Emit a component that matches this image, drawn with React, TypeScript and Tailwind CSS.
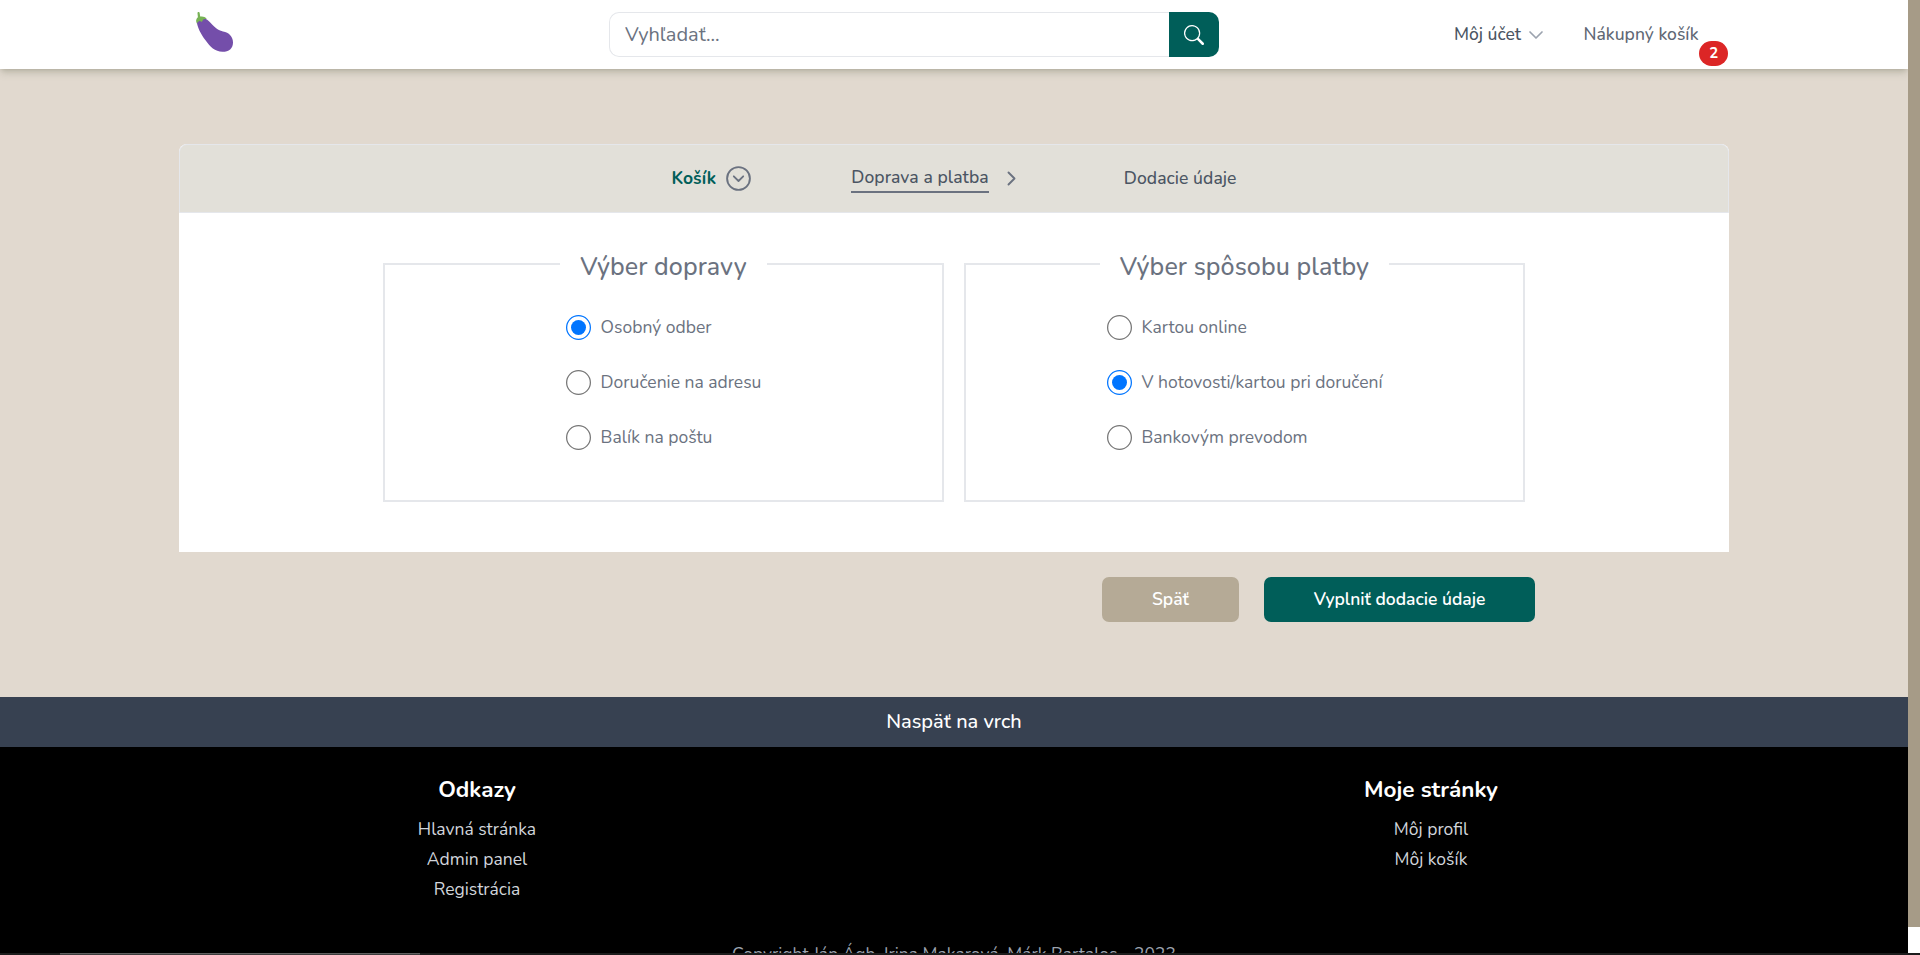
import React from 'react';
import { BsSearch } from 'react-icons/bs';

function Eggplant() {
  return (
    <svg viewBox="0 0 37 40" className="h-10 w-[37px]" aria-hidden="true">
      <path
        fill="#744eaa"
        d="M0.900 10C1.200 15 4.800 22 9.500 28.300C14 34.800 19 39.800 26.500 39.800C33 39.800 37 36.500 37 30.500C37 24.500 33 20.500 27 19.500C21 18.200 17.500 14 14.500 10.800C12 7.800 9.500 6.300 6.500 6.500C3.500 6.500 0.800 7.500 0.900 10Z"
      />
      <path
        fill="#77b255"
        d="M1.500 1.200C1.500 -0.200 3.500 -0.300 3.700 1.200L4.200 4.600C6.500 4 9 4.600 10.800 6.800C9.500 7 8.400 7.400 7.500 7.300C6.900 8.100 6.400 9.400 5.400 10.100C4.800 9.600 4.300 8.900 3.700 8.700C3 9.300 1.600 9.700 0.900 11.400C-0.300 9.400 -0.200 7 1.900 5.200Z"
      />
    </svg>
  );
}

function DownChevron() {
  return (
    <svg viewBox="0 0 16 16" className="h-4 w-4 text-[#9ca3af]" fill="none" stroke="currentColor" aria-hidden="true">
      <path d="M2 5L8 11L14 5" strokeWidth="1.700" strokeLinecap="round" strokeLinejoin="round" />
    </svg>
  );
}

function CircleChevron() {
  return (
    <svg viewBox="0 0 25 25" className="size-[25px] text-[#6b7280]" fill="none" stroke="currentColor" aria-hidden="true">
      <circle cx="12.500" cy="12.500" r="11.400" strokeWidth="1.900" />
      <path d="M7.800 10.300L12.500 15L17.200 10.300" strokeWidth="1.800" strokeLinecap="round" strokeLinejoin="round" />
    </svg>
  );
}

function RightChevron() {
  return (
    <svg viewBox="0 0 25 25" className="size-[25px] text-[#6b7280]" fill="none" stroke="currentColor" aria-hidden="true">
      <path d="M9.500 6.500L15.500 12.500L9.500 18.500" strokeWidth="1.900" strokeLinecap="round" strokeLinejoin="round" />
    </svg>
  );
}

type GroupProps = { title: string; name: string; options: string[]; selected: number };

function OptionGroup({ title, name, options, selected }: GroupProps) {
  return (
    <fieldset className="h-[258px] w-[561px] border-2 border-[#e5e7eb]">
      <legend className="mx-auto px-5 pt-[6px] text-[25px] leading-[34px] font-medium tracking-[0.09px] text-[#6b7280]">
        {title}
      </legend>
      <div className="flex justify-center pt-[31px]">
        <div className="flex flex-col gap-[30px]">
          {options.map((option, i) => (
            <label key={option} className="flex h-[25px] items-center gap-2.5 text-[17.5px] leading-[25px] text-[#6b7280]">
              <input type="radio" name={name} defaultChecked={i === selected} className="size-5 [zoom:1.25]" />
              {option}
            </label>
          ))}
        </div>
      </div>
    </fieldset>
  );
}

function LinkColumn({ title, links }: { title: string; links: string[] }) {
  return (
    <div className="flex w-[954px] flex-col items-center">
      <h2 className="mb-[7px] text-[22.5px] leading-[35px] font-bold text-white">{title}</h2>
      {links.map((link) => (
        <a key={link} href="#" className="text-[17.5px] leading-[30px] text-[#d1d5db]">
          {link}
        </a>
      ))}
    </div>
  );
}

export default function App() {
  return (
    <div className="flex h-[955px] w-[1920px] flex-col overflow-hidden bg-[#1c1c1c] font-['Nunito','Lato',sans-serif]">
      <div className="flex h-[953px] shrink-0">
        <div className="flex w-[1908px] flex-col overflow-hidden bg-[#e1d9cf]">
          <header className="z-10 flex h-[69px] shrink-0 bg-white shadow-[0_5px_7px_-1px_rgba(110,115,90,0.28),0_2px_4px_-2px_rgba(90,90,80,0.25)]">
            <div className="w-[609px] pt-3 pl-[196px]">
              <Eggplant />
            </div>
            <form className="mt-3 flex h-[45px] w-[610px]">
              <input
                placeholder="Vyhľadať..."
                className="min-w-0 flex-1 rounded-l-[10px] border border-r-0 border-[#e5e7eb] px-[15px] text-[20px] text-[#6b7280] outline-none placeholder:text-[#6b7280]"
              />
              <button type="button" aria-label="Hľadať" className="flex w-[50px] items-center justify-center rounded-r-[10px] bg-[#005e59] text-white">
                <BsSearch className="size-5" />
              </button>
            </form>
            <nav className="flex items-start pt-[22px] pl-[235px] text-[17.5px] leading-[25px] font-medium">
              <a href="#" className="flex items-center gap-[7px] text-[#4b5563]">
                Môj účet
                <DownChevron />
              </a>
              <a href="#" className="ml-[39.500px] text-[#5f6875]">Nákupný košík</a>
              <span className="mt-[19px] ml-[0.500px] flex h-[25px] w-[29px] items-center justify-center rounded-full bg-[#dc2626] text-[15px] font-bold text-white">2</span>
            </nav>
          </header>

          <main className="h-[628px] shrink-0 px-[179px] pt-[75px]">
            <section className="h-[408px] rounded-t-lg bg-white">
              <div className="flex h-[69px] items-center justify-center gap-[100px] rounded-t-lg border border-[#e5e7eb] bg-[#e2e0d9] text-[17.5px] leading-[25px] font-medium tracking-[0.08px] text-[#4b5563]">
                <div className="flex items-center gap-2.5 font-bold text-[#005e59]">
                  Košík
                  <CircleChevron />
                </div>
                <div className="flex items-center gap-2.5">
                  <span className="border-b-2 border-[#6b7280] pb-px">Doprava a platba</span>
                  <RightChevron />
                </div>
                <span>Dodacie údaje</span>
              </div>
              <div className="flex justify-center gap-5 pt-[31px]">
                <OptionGroup
                  title="Výber dopravy"
                  name="delivery"
                  options={['Osobný odber', 'Doručenie na adresu', 'Balík na poštu']}
                  selected={0}
                />
                <OptionGroup
                  title="Výber spôsobu platby"
                  name="payment"
                  options={['Kartou online', 'V hotovosti/kartou pri doručení', 'Bankovým prevodom']}
                  selected={1}
                />
              </div>
            </section>
            <div className="mr-[194px] flex justify-end gap-[25px] pt-[25px] text-[17.5px] leading-[25px] font-semibold text-white">
              <button className="h-[45px] w-[137px] rounded-[7px] bg-[#b5aa96]">Späť</button>
              <button className="h-[45px] w-[271px] rounded-[7px] bg-[#005e59]">Vyplniť dodacie údaje</button>
            </div>
          </main>

          <a href="#" className="flex h-[50px] shrink-0 items-center justify-center bg-[#374151] text-[20px] font-medium text-white">
            Naspäť na vrch
          </a>
          <footer className="h-[206px] overflow-hidden bg-black">
            <div className="flex h-[195px] pt-[25px]">
              <LinkColumn title="Odkazy" links={['Hlavná stránka', 'Admin panel', 'Registrácia']} />
              <LinkColumn title="Moje stránky" links={['Môj profil', 'Môj košík']} />
            </div>
            <p className="text-center text-[17.5px] leading-[25px] text-[#9ca3af]">
              Copyright Ján Ágh, Irina Makarová, Márk Bartalos - 2023
            </p>
          </footer>
        </div>
        <div className="w-3 bg-white">
          <div className="h-[927px] bg-[#a69b87]" />
        </div>
      </div>
      <div className="h-0.5 pl-[60px]">
        <div className="h-full w-[360px] border-t border-[#606060] bg-[#3c3c3c]" />
      </div>
    </div>
  );
}
